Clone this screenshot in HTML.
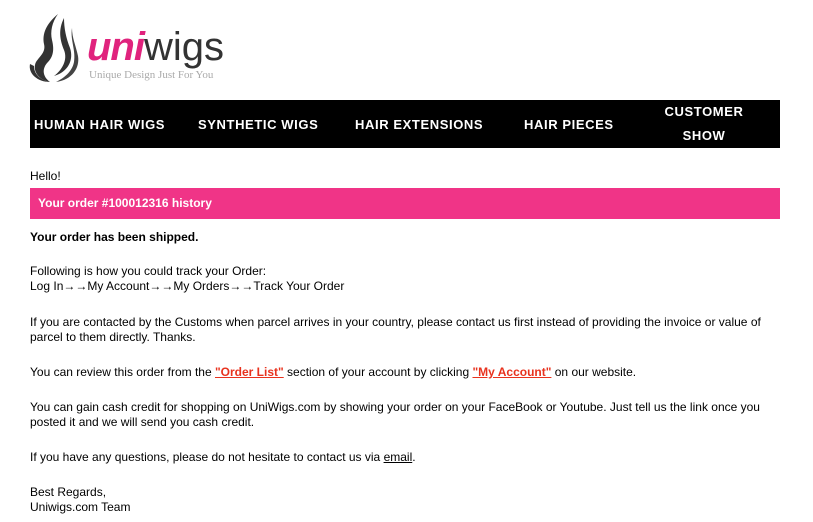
<!DOCTYPE html>
<html><head><meta charset="utf-8"><style>
body{margin:0;background:#fff;width:813px;height:522px;overflow:hidden;position:relative;font-family:"Liberation Sans",Arial,sans-serif;font-size:12px;color:#000}
.a{position:absolute;white-space:nowrap;line-height:15px}
.nav{position:absolute;left:30px;top:100px;width:750px;height:48px;background:#000}
.nav span{position:absolute;color:#fff;font-weight:bold;font-size:13px;line-height:24px;text-align:center;letter-spacing:0.6px;top:13px}
.pink{position:absolute;left:30px;top:188px;width:750px;height:31px;background:#f03487;color:#fff;font-weight:bold}
a{color:#e8321e;font-weight:bold;text-decoration:underline}
</style></head><body>
<svg style="position:absolute;left:28px;top:12px" width="60" height="72" viewBox="0 0 60 72">
<path d="M30 2C18 12 14 22 16 32C18 40 12 44 8 50C4 58 10 68 22 70C14 64 14 56 20 50C26 44 26 36 24 28C22 20 24 10 30 2Z" fill="#333"/>
<path d="M36 6C30 18 32 28 36 38C40 48 34 58 26 64C40 60 46 48 42 36C38 26 36 16 36 6Z" fill="#333"/>
<path d="M44 16C42 28 48 38 46 50C44 60 36 66 28 70C44 68 52 56 50 44C48 34 44 26 44 16Z" fill="#444"/>
<path d="M2 52C0 62 10 70 22 70C12 68 6 62 6 54Z" fill="#333"/>
</svg>
<div class="a" style="left:87px;top:25px;font-size:40px;line-height:44px;font-weight:bold;font-style:italic;color:#e0237d;letter-spacing:-1px">uni<span style="color:#333;font-weight:normal;font-style:normal;letter-spacing:0">wigs</span></div>
<div class="a" style="left:89px;top:68px;font-family:'Liberation Serif',serif;font-size:11px;color:#aaa">Unique Design Just For You</div>
<div class="nav">
<span style="left:4px">HUMAN HAIR WIGS</span>
<span style="left:168px">SYNTHETIC WIGS</span>
<span style="left:325px">HAIR EXTENSIONS</span>
<span style="left:494px">HAIR PIECES</span>
<span style="left:620px;top:0;width:108px;top:0">CUSTOMER<br>SHOW</span>
</div>
<div class="a" style="left:30px;top:169px">Hello!</div>
<div class="pink"><div class="a" style="left:8px;top:8px">Your order #100012316 history</div></div>
<div class="a" style="left:30px;top:230px;font-weight:bold">Your order has been shipped.</div>
<div class="a" style="left:30px;top:264px">Following is how you could track your Order:<br>Log In→→My Account→→My Orders→→Track Your Order</div>
<div class="a" style="left:30px;top:315px">If you are contacted by the Customs when parcel arrives in your country, please contact us first instead of providing the invoice or value of<br>parcel to them directly. Thanks.</div>
<div class="a" style="left:30px;top:365px">You can review this order from the <a>"Order List"</a> section of your account by clicking <a>"My Account"</a> on our website.</div>
<div class="a" style="left:30px;top:400px">You can gain cash credit for shopping on UniWigs.com by showing your order on your FaceBook or Youtube. Just tell us the link once you<br>posted it and we will send you cash credit.</div>
<div class="a" style="left:30px;top:450px">If you have any questions, please do not hesitate to contact us via <span style="text-decoration:underline">email</span>.</div>
<div class="a" style="left:30px;top:485px">Best Regards,<br>Uniwigs.com Team</div>
</body></html>
